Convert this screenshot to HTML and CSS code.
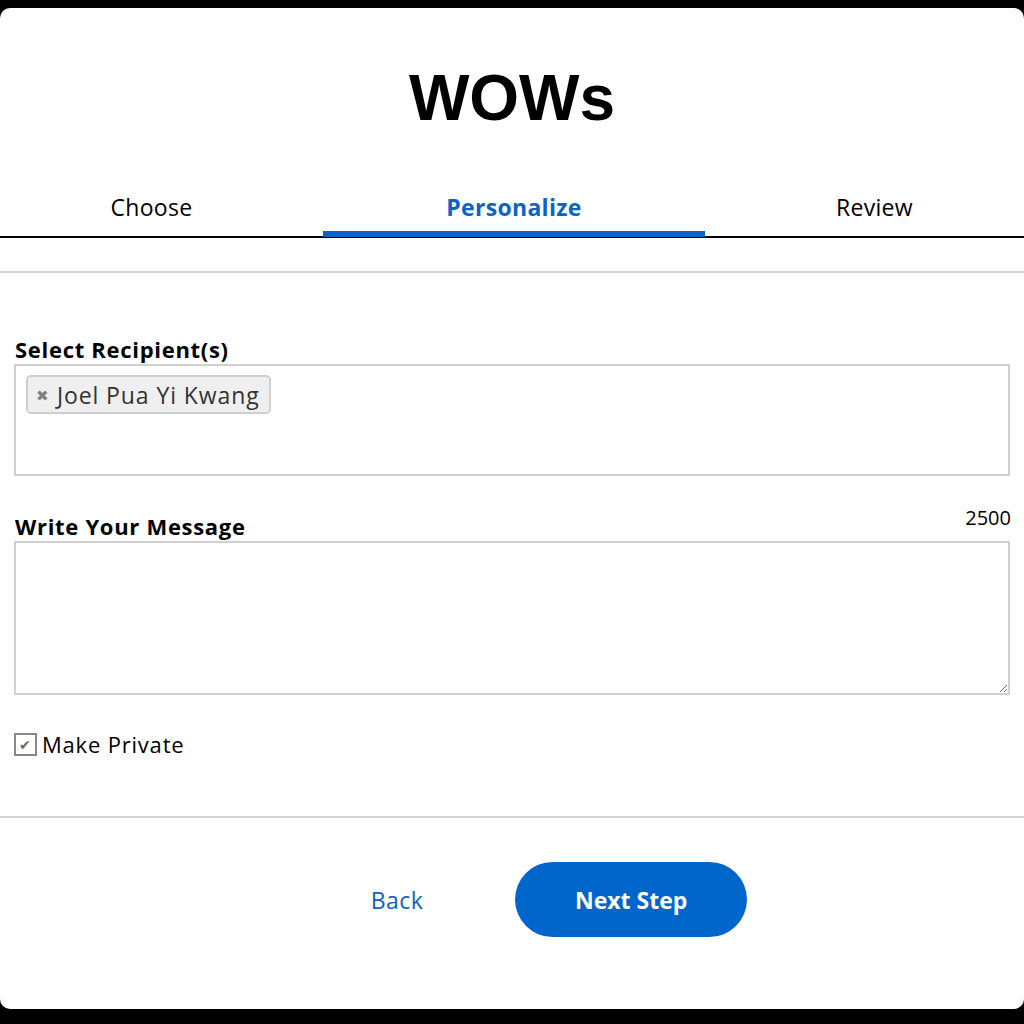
FILE: index.html
```html
<!DOCTYPE html>
<html lang="en">
<head>
    <meta charset="UTF-8">
    <meta name="viewport" content="width=device-width, initial-scale=1.0">
    <title>WOWs</title>
    <link rel="stylesheet" href="styles.css">
</head>
<body>
    <div class="panel">
        <header class="title">
            <h1>WOWs</h1>
        </header>

        <!-- Steps -->
        <nav class="steps">
            <div class="step">Choose</div>
            <div class="step active">Personalize</div>
            <div class="step">Review</div>
        </nav>

        <main class="form">
            <div class="field">
                <div class="label-row">
                    <label>Select Recipient(s)</label>
                </div>
                <div class="recipients">
                    <span class="chip"><span class="chip-x">&#x2716;</span>Joel Pua Yi Kwang</span>
                </div>
            </div>

            <div class="field">
                <div class="label-row">
                    <label for="message">Write Your Message</label>
                    <span class="counter">2500</span>
                </div>
                <textarea id="message" class="message"></textarea>
            </div>

            <label class="private">
                <span class="check">&#x2714;</span>
                Make Private
            </label>
        </main>

        <footer class="actions">
            <a href="#" class="back">Back</a>
            <button class="next">Next Step</button>
        </footer>
    </div>
</body>
</html>
```

FILE: styles.css
```css
/* General Styles */
body {
    margin: 0;
    padding: 8px 0 15px;
    background-color: #000;
    font-family: "Open Sans", "Lato", sans-serif;
    color: #000;
}

.panel {
    background-color: #fff;
    border-radius: 10px;
    height: 1001px;
    box-sizing: border-box;
    display: flex;
    flex-direction: column;
}

.title h1 {
    margin: 0;
    padding-top: 54px;
    height: 114px;
    box-sizing: border-box;
    text-align: center;
    font-family: "Liberation Sans", Arial, sans-serif;
    font-size: 64px;
    line-height: 72px;
    font-weight: bold;
}

/* Steps */
.steps {
    display: grid;
    grid-template-columns: 323px 382px 1fr;
    margin-top: 66px;
    border-bottom: 2px solid #000;
}

.step {
    text-align: center;
    font-size: 23px;
    letter-spacing: 0.3px;
    line-height: 38px;
    height: 48px;
    padding-right: 20px;
    box-sizing: border-box;
}

.step.active {
    color: #0a64c6;
    font-weight: bold;
    padding-right: 0;
    border-bottom: 6px solid #0a64c6;
    height: 49px;
    margin-bottom: -1px;
}

.step:last-child {
    padding-right: 0;
    padding-left: 20px;
}

/* Form */
.form {
    border-top: 2px solid #d4d4d4;
    margin-top: 33px;
    padding: 61px 14px 0 14px;
    border-bottom: 2px solid #d4d4d4;
    height: 547px;
    box-sizing: border-box;
}

.field {
    margin-bottom: 28px;
}

.label-row {
    display: flex;
    justify-content: space-between;
    align-items: flex-end;
}

.label-row label {
    font-size: 22px;
    font-weight: bold;
    letter-spacing: 0.7px;
    line-height: 30px;
    padding-left: 1px;
}

.counter {
    font-size: 20px;
    padding-bottom: 10px;
    margin-right: -1px;
}

.recipients {
    border: 2px solid #d0d0d0;
    height: 112px;
    box-sizing: border-box;
    padding: 9px 10px;
}

.chip {
    display: inline-flex;
    align-items: center;
    height: 39px;
    box-sizing: border-box;
    padding: 0 9px 0 8px;
    border: 2px solid #cfcfcf;
    border-radius: 5px;
    background-color: #efefef;
    color: #333;
    font-size: 23px;
    letter-spacing: 0.9px;
}

.chip-x {
    color: #808080;
    font-size: 15px;
    margin-right: 7px;
}

.message {
    display: block;
    width: 100%;
    height: 154px;
    box-sizing: border-box;
    border: 2px solid #d0d0d0;
    margin: 0;
    resize: vertical;
    font-family: inherit;
}

.private {
    display: flex;
    align-items: center;
    font-size: 22px;
    letter-spacing: 0.8px;
    margin-top: 34px;
}

.check {
    width: 23px;
    height: 23px;
    box-sizing: border-box;
    border: 2px solid #888;
    color: #6a6a6a;
    font-size: 14px;
    display: flex;
    align-items: center;
    justify-content: center;
    margin-right: 5px;
}

/* Actions */
.actions {
    display: flex;
    justify-content: center;
    align-items: center;
    padding-top: 44px;
    padding-left: 94px;
}

.back {
    color: #0a64c6;
    text-decoration: none;
    font-size: 23px;
    letter-spacing: 0.4px;
    margin-right: 92px;
}

.next {
    background-color: #0066cc;
    color: #fff;
    border: none;
    border-radius: 38px;
    width: 232px;
    height: 75px;
    font-family: inherit;
    font-size: 23px;
    font-weight: bold;
}
```
